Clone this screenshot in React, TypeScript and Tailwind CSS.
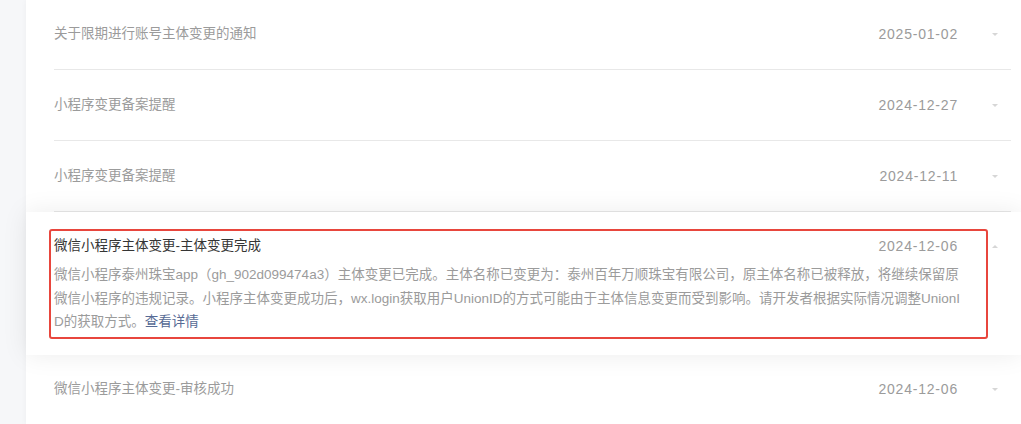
import React from "react";

interface Notice {
  id: number;
  title: string;
  date: string;
}

const font = { fontFamily: '"Liberation Sans", "Noto Sans CJK SC", sans-serif' };

const Chevron = ({ up }: { up?: boolean }) => (
  <span
    className={
      up
        ? "ml-[34px] mr-[13px] h-0 w-0 border-x-[3px] border-b-[3px] border-x-transparent border-b-[#d6d6d6]"
        : "ml-[34px] mr-[13px] h-0 w-0 border-x-[3px] border-t-[3px] border-x-transparent border-t-[#d6d6d6]"
    }
  />
);

const NoticeRow = ({ item, first }: { item: Notice; first?: boolean }) => {
  return (
    <div className="pl-[28px] pr-[10px]">
      <div
        className={`flex items-center border-b border-[#e8e8e8] ${first ? "h-[70px]" : "h-[71px]"}`}
      >
        <div className="flex-1 text-[13.5px] text-[#9b9b9b]">{item.title}</div>
        <div className="text-[14px] tracking-[0.8px] text-[#9b9b9b]">{item.date}</div>
        <Chevron />
      </div>
    </div>
  );
};

const notices: Notice[] = [
  { id: 1, title: "关于限期进行账号主体变更的通知", date: "2025-01-02" },
  { id: 2, title: "小程序变更备案提醒", date: "2024-12-27" },
  { id: 3, title: "小程序变更备案提醒", date: "2024-12-11" },
];

export default function App() {
  return (
    <div className="flex min-h-[424px] overflow-hidden bg-[#f6f7f9]" style={font}>
      <div className="w-[26px] shrink-0" />
      <div className="flex-1 bg-white shadow-[0_0_6px_rgba(0,0,0,0.04)]">
        {notices.map((item, i) => (
          <NoticeRow key={item.id} item={item} first={i === 0} />
        ))}

        {/* expanded item */}
        <div className="relative z-10 bg-white pl-[28px] pr-[10px] pt-[22px] pb-[21px] shadow-[0_0_24px_rgba(0,0,0,0.08)]">
          <div className="flex h-[24px] items-center">
            <div className="flex-1 text-[13.5px] text-[#353535]">微信小程序主体变更-主体变更完成</div>
            <div className="text-[14px] tracking-[0.8px] text-[#9b9b9b]">2024-12-06</div>
            <Chevron up />
          </div>
          <div className="mt-[5px] text-[13.5px] leading-[23.5px] text-[#9b9b9b]">
            <div className="whitespace-nowrap">
              微信小程序泰州珠宝app（gh_902d099474a3）主体变更已完成。主体名称已变更为：泰州百年万顺珠宝有限公司，原主体名称已被释放，将继续保留原
            </div>
            <div className="whitespace-nowrap">
              微信小程序的违规记录。小程序主体变更成功后，wx.login获取用户UnionID的方式可能由于主体信息变更而受到影响。请开发者根据实际情况调整UnionI
            </div>
            <div className="whitespace-nowrap">
              D的获取方式。<span className="text-[#576b95]">查看详情</span>
            </div>
          </div>
          <div className="pointer-events-none absolute left-[23px] top-[17px] h-[110px] w-[939px] rounded-[3px] border-2 border-[#e8463d]" />
        </div>

        <NoticeRow item={{ id: 5, title: "微信小程序主体变更-审核成功", date: "2024-12-06" }} />
      </div>
    </div>
  );
}
